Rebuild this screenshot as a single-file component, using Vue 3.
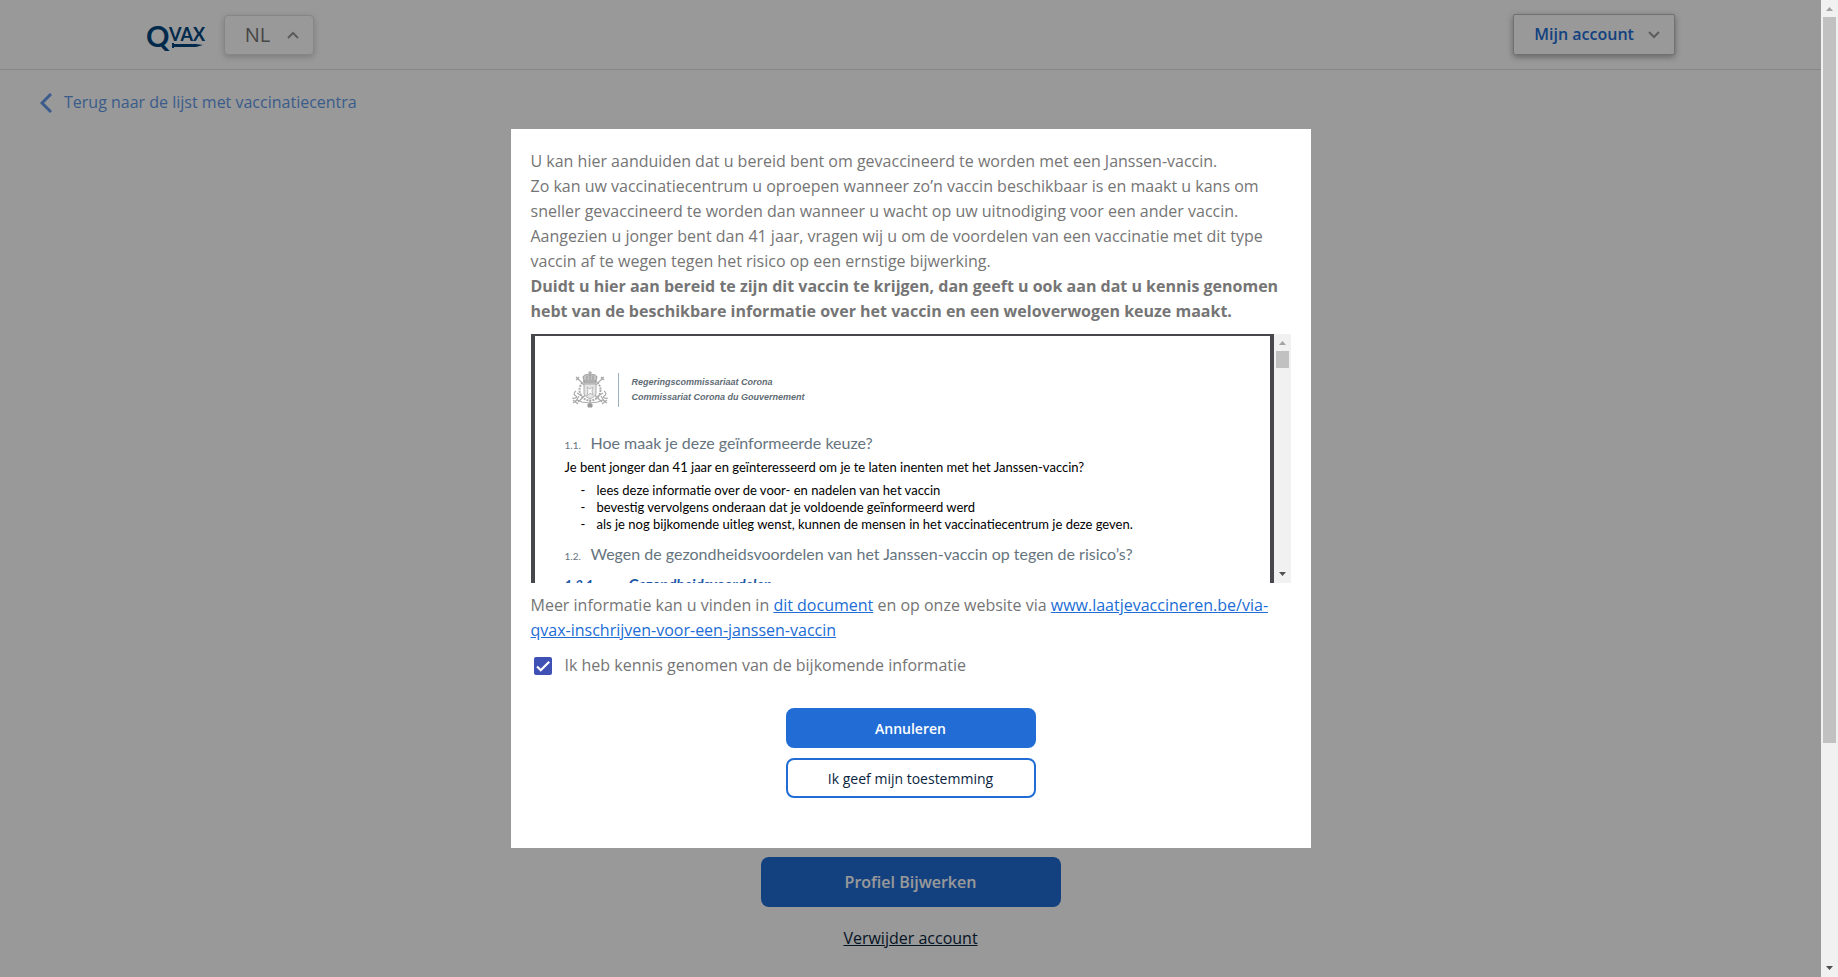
<template>
  <div class="app">
    <div class="page">
      <header class="topbar">
        <a class="logo" href="#" aria-label="QVAX">
          <svg width="60" height="32" viewBox="0 0 60 32" aria-hidden="true">
            <text class="logo-q" x="0" y="28">Q</text>
            <text class="logo-vax" x="23" y="22">VAX</text>
            <path d="M26 24h2v1h22l7 1-7 2H28v1h-2z" fill="#00467f" />
          </svg>
        </a>
        <div class="lang">
          <select v-model="lang" aria-label="Taal">
            <option v-for="l in langs" :key="l">{{ l }}</option>
          </select>
          <svg class="caret" width="12" height="8" viewBox="0 0 12 8"><path d="M1 7l5-5 5 5" /></svg>
        </div>
        <button class="account" type="button" aria-haspopup="menu">
          <span>Mijn account</span>
          <svg class="caret" width="12" height="8" viewBox="0 0 12 8"><path d="M1 1l5 5 5-5" /></svg>
        </button>
      </header>

      <main class="content">
        <a class="back" href="#">
          <svg width="12" height="20" viewBox="0 0 12 20"><path d="M11 1L2 10l9 9" /></svg>
          <span>Terug naar de lijst met vaccinatiecentra</span>
        </a>
        <div class="profile-actions">
          <button class="update" type="button">Profiel Bijwerken</button>
          <a class="remove" href="#">Verwijder account</a>
        </div>
      </main>

      <div class="overlay">
        <section class="modal" role="dialog" aria-modal="true">
          <p>
            U kan hier aanduiden dat u bereid bent om gevaccineerd te worden met een Janssen-vaccin.<br />
            Zo kan uw vaccinatiecentrum u oproepen wanneer zo’n vaccin beschikbaar is en maakt u kans om
            sneller gevaccineerd te worden dan wanneer u wacht op uw uitnodiging voor een ander vaccin.<br />
            Aangezien u jonger bent dan 41 jaar, vragen wij u om de voordelen van een vaccinatie met dit type
            vaccin af te wegen tegen het risico op een ernstige bijwerking.<br />
            <strong>Duidt u hier aan bereid te zijn dit vaccin te krijgen, dan geeft u ook aan dat u kennis
            genomen hebt van de beschikbare informatie over het vaccin en een weloverwogen keuze maakt.</strong>
          </p>

          <div class="viewer">
            <article class="doc">
              <div class="doc-head">
                <svg class="arms" width="38" height="38" viewBox="0 0 38 38" aria-hidden="true">
                  <g fill="none" stroke="#aaa" stroke-width="1.2">
                    <path d="M6 7l25 24M32 7L7 31" />
                    <circle cx="19" cy="19" r="10.5" stroke-width="2" stroke-dasharray="2 1" />
                    <path d="M2 32l4-3 5 2 8 1 8-1 5-2 4 3M2 29l5 4M36 29l-5 4" />
                    <path d="M5 20c-3 2-2 4 0 5s-1 3-4 2M33 20c3 2 2 4 0 5s1 3 4 2M6 22l5 3M32 22l-5 3M8 25l-3 5M30 25l3 5" />
                    <path d="M5 6l3 2M5 9l3-3M33 6l-3 2M33 9l-3-3" />
                  </g>
                  <path d="M13 9c-3-5 2-6 6-5 4-1 9 0 6 5v3H13z" fill="#c4c4c4" stroke="#999" />
                  <path d="M19 0v4M17 2h4M16 5v4M19 4v5M22 5v4M13 10h12" stroke="#999" fill="none" />
                  <path d="M13 13h12v9c0 3-3 4-6 6-3-2-6-3-6-6z" fill="#e4e4e4" stroke="#aaa" />
                  <path d="M16 16l3 2 3-2-1 4 1 4-3-2-3 3 1-5z" fill="#fff" stroke="#bbb" />
                  <path d="M19 29v7M17 33h4v3h-4z" fill="#999" stroke="#999" />
                </svg>
                <div class="doc-org">
                  <span>Regeringscommissariaat Corona</span>
                  <span>Commissariat Corona du Gouvernement</span>
                </div>
              </div>
              <h2><small>1.1.</small>Hoe maak je deze geïnformeerde keuze?</h2>
              <p>Je bent jonger dan 41 jaar en geïnteresseerd om je te laten inenten met het Janssen-vaccin?</p>
              <ul>
                <li v-for="s in steps" :key="s">{{ s }}</li>
              </ul>
              <h2><small>1.2.</small>Wegen de gezondheidsvoordelen van het Janssen-vaccin op tegen de risico’s?</h2>
              <h3><span>1.2.1.</span>Gezondheidsvoordelen</h3>
            </article>
            <div class="scrollbar inner" aria-hidden="true">
              <svg width="17" height="17" viewBox="0 0 17 17"><path d="M5 11h7L8.500 7z" fill="#a3a3a3" /></svg>
              <div class="track"><div class="thumb"></div></div>
              <svg width="17" height="17" viewBox="0 0 17 17"><path d="M5 6h7l-3.500 4z" fill="#505050" /></svg>
            </div>
          </div>

          <p>
            Meer informatie kan u vinden in <a href="#">dit document</a> en op onze website via
            <a href="#">www.laatjevaccineren.be/via-qvax-inschrijven-voor-een-janssen-vaccin</a>
          </p>

          <label class="agree">
            <span class="box">
              <input v-model="agreed" type="checkbox" />
              <svg v-if="agreed" width="18" height="18" viewBox="0 0 24 24"><path d="M4.100 12.700L9 17.600 20.300 6.300" /></svg>
            </span>
            <span>Ik heb kennis genomen van de bijkomende informatie</span>
          </label>

          <div class="actions">
            <button class="primary" type="button">Annuleren</button>
            <button class="secondary" type="button">Ik geef mijn toestemming</button>
          </div>
        </section>
      </div>
    </div>

    <div class="scrollbar outer" aria-hidden="true">
      <svg width="17" height="17" viewBox="0 0 17 17"><path d="M5 11h7L8.500 7z" fill="#a3a3a3" /></svg>
      <div class="track"><div class="thumb"></div></div>
      <svg width="17" height="17" viewBox="0 0 17 17"><path d="M5 6h7l-3.500 4z" fill="#505050" /></svg>
    </div>
  </div>
</template>

<script setup>
import { ref } from 'vue'

const langs = ['NL', 'FR', 'EN', 'DE']
const lang = ref('NL')
const agreed = ref(true)

const steps = [
  'lees deze informatie over de voor- en nadelen van het vaccin',
  'bevestig vervolgens onderaan dat je voldoende geïnformeerd werd',
  'als je nog bijkomende uitleg wenst, kunnen de mensen in het vaccinatiecentrum je deze geven.',
]
</script>

<style>
body { margin: 0; background: #fff; }
</style>

<style scoped>
.app {
  display: flex;
  min-height: 100vh;
  font: 16px/25px "Open Sans", sans-serif;
  color: #757575;
}
.app *, .app { box-sizing: border-box; }
svg { display: block; flex: none; }
button, select, input { font: inherit; color: inherit; margin: 0; cursor: pointer; }
a { color: #216dd5; }

.page { position: relative; flex: 1; display: flex; flex-direction: column; min-width: 0; }

/* top bar */
.topbar {
  display: flex;
  align-items: center;
  height: 70px;
  padding: 0 8%;
  border-bottom: 1px solid #e0e0e0;
}
.logo { margin-right: 18px; }
.logo-q { font: 700 29px Lato, sans-serif; fill: #00467f; }
.logo-vax { font: 700 18px Lato, sans-serif; fill: #00467f; }
.caret { fill: none; stroke: #9a9a9a; stroke-width: 2; }
.lang { display: grid; align-items: center; }
.lang select {
  grid-area: 1 / 1;
  width: 90px;
  height: 40px;
  padding: 0 20px;
  font-size: 20px;
  appearance: none;
  background: #fff;
  border: 1px solid #e0e0e0;
  border-radius: 4px;
  box-shadow: 0 2px 6px rgba(0, 0, 0, .2);
}
.lang .caret { grid-area: 1 / 1; justify-self: end; margin-right: 15px; pointer-events: none; }
.account {
  display: flex;
  align-items: center;
  justify-content: space-between;
  width: 162px;
  height: 41px;
  margin-left: auto;
  padding: 0 14px 0 20px;
  background: #fff;
  border: 1px solid #bdbdbd;
  border-radius: 2px;
  box-shadow: 0 2px 6px rgba(0, 0, 0, .35);
  color: #216dd5;
  font-weight: 600;
}

/* page behind the dialog */
.content { flex: 1; display: flex; flex-direction: column; padding: 20px 40px 26px; }
.back { display: flex; align-items: center; gap: 12px; align-self: flex-start; color: #6399e8; text-decoration: none; }
.back svg { fill: none; stroke: #6399e8; stroke-width: 3; }
.profile-actions { display: flex; flex-direction: column; align-items: center; gap: 19px; margin-top: auto; }
.update {
  width: 300px;
  height: 50px;
  background: #216dd5;
  border: 0;
  border-radius: 8px;
  color: #fff;
  font-weight: 600;
}
.remove { color: #0a2540; }

/* dialog */
.overlay {
  position: absolute;
  inset: 0;
  display: flex;
  align-items: center;
  justify-content: center;
  background: rgba(0, 0, 0, .4);
}
.modal { width: 800px; max-width: 100%; padding: 20px 20px 50px; background: #fff; }
.modal p { margin: 0; }
.viewer { display: flex; height: 249px; margin: 10px 0; }

.doc {
  flex: 1;
  min-width: 0;
  overflow: hidden;
  padding: 35px 30px 0;
  border: solid #47484b;
  border-width: 2px 4px 0;
  background: #fff;
  color: #000;
  font: 13px/17px Lato, sans-serif;
}
.doc-head { display: flex; align-items: center; gap: 9px; padding-left: 6px; margin-bottom: 22px; }
.doc-org {
  display: flex;
  flex-direction: column;
  padding: 2px 0 2px 13px;
  border-left: 1px solid #9fb0bd;
  color: #5f6c75;
  font: italic bold 9px/15px "Liberation Sans", sans-serif;
}
.doc h2 { display: flex; align-items: baseline; margin: 0; color: #66747e; font-size: 16px; font-weight: 400; line-height: 24px; }
.doc h2 small { width: 26px; font-size: 10px; }
.modal .doc p { margin: 2px 0 6px; }
.doc ul { margin: 0 0 9px; padding: 0; list-style: none; }
.doc li { display: flex; padding-left: 16px; }
.doc li::before { content: "-"; width: 16px; }
.doc h3 { display: flex; align-items: baseline; margin: 4px 0 0; color: #1d56a8; font-size: 15px; font-style: italic; font-weight: 700; line-height: 24px; }
.doc h3 span { width: 64px; font-size: 13px; }

.agree { display: flex; align-items: center; gap: 13px; margin-top: 10px; padding-left: 3px; cursor: pointer; }
.box { display: grid; }
.box input { grid-area: 1 / 1; width: 18px; height: 18px; appearance: none; border: 2px solid #757575; border-radius: 2px; }
.box input:checked { background: #3f51b5; border-color: #3f51b5; }
.box svg { grid-area: 1 / 1; fill: none; stroke: #fff; stroke-width: 3; pointer-events: none; }

.actions { display: flex; flex-direction: column; align-items: center; gap: 10px; margin-top: 30px; }
.actions button { width: 250px; height: 40px; border: 2px solid #216dd5; border-radius: 8px; font-size: 14px; }
.primary { background: #216dd5; color: #fff; font-weight: 600; }
.secondary { background: #fff; color: #0a2540; }

/* scrollbars */
.scrollbar { display: flex; flex-direction: column; flex: none; width: 17px; background: #f1f1f1; }
.track { flex: 1; display: flex; flex-direction: column; padding: 0 2px; }
.thumb { background: #c1c1c1; }
.inner .thumb { height: 17px; }
.outer .thumb { flex: 0 0 77%; }
</style>
